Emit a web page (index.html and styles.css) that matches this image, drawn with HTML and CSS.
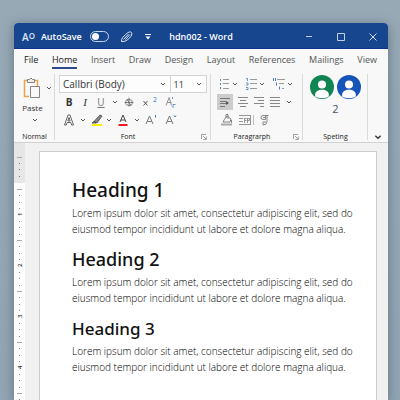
FILE: index.html
```html
<!DOCTYPE html>
<html lang="en">
<head>
<meta charset="utf-8">
<meta name="viewport" content="width=device-width, initial-scale=1">
<title>hdn002 - Word</title>
<link rel="stylesheet" href="styles.css">
</head>
<body>
<svg class="defs" aria-hidden="true">
  <symbol id="chev" viewBox="0 0 6 6"><path d="M1 2l2 2 2-2" fill="none" stroke="currentColor" stroke-width="1"/></symbol>
  <symbol id="launch" viewBox="0 0 6 6"><path d="M.5 5V.5H5M2 2l3 3M5.300 2.500v3h-3" fill="none" stroke="currentColor" stroke-width=".8"/></symbol>
  <symbol id="person" viewBox="0 0 24 24"><circle cx="12" cy="12" r="12"/><circle cx="12" cy="9.500" r="4" fill="#fff"/><path d="M5.200 21.500c-.6-4.500 2-6.700 6.800-6.700s7.400 2.200 6.800 6.700c-3.500 2.300-10 2.300-13.600 0z" fill="#fff"/></symbol>
</svg>
<main class="window">
  <header class="titlebar">
    <div class="quick">
      <span class="logo">A<small>O</small></span>
      <label class="autosave">AutoSave <input type="checkbox" class="toggle"></label>
      <button class="pen" aria-label="Edit"><svg width="13" height="12" viewBox="0 0 13 12"><g fill="none" stroke="#dce5f5"><path d="M1.500 10.500c-.5-3 2-5 4-7s5-3.500 6-2 0 3.500-2 5.500-4.500 4-8 3.500z"/><path d="M3.500 8.500l5-5.500M5.500 8.500l4.500-5"/></g></svg></button>
      <button aria-label="Customize toolbar"><svg width="8" height="8" viewBox="0 0 8 8"><path d="M1 1.500h6" stroke="#fff"/><path d="M1.500 3.500h5l-2.500 3z" fill="#fff"/></svg></button>
    </div>
    <h1>hdn002 - Word</h1>
    <div class="controls">
      <button aria-label="Minimize"><svg width="10" height="10" viewBox="0 0 10 10"><path d="M2 4.500h6" stroke="#c4d0e6"/></svg></button>
      <button aria-label="Maximize"><svg width="10" height="10" viewBox="0 0 10 10"><path d="M1.500 1.500h7v7h-7z" fill="none" stroke="#c4d0e6"/></svg></button>
      <button aria-label="Close"><svg width="10" height="10" viewBox="0 0 10 10"><path d="M1.500 1.500l7 7m0-7l-7 7" stroke="#d4deee"/></svg></button>
    </div>
  </header>
  <nav class="tabs">
    <a href="#" class="dark">File</a><a href="#" class="dark active">Home</a><a href="#">Insert</a><a href="#">Draw</a><a href="#">Design</a><a href="#">Layout</a><a href="#">References</a><a href="#">Mailings</a><a href="#">View</a>
  </nav>
  <section class="ribbon">
    <div class="group clipboard">
      <div class="tools">
        <button class="paste">
          <span class="paste-icon"><svg width="18" height="22" viewBox="0 0 18 22"><path d="M5 3.500H1.500v16H6M11 3.500h3.500V9" fill="none" stroke="#e9a54b" stroke-width="1.500"/><path d="M4.500 5.500v-3h2q1.500-3 3 0h2v3z" fill="#eee" stroke="#777" stroke-width=".9"/><path d="M7.500 9.500h9v11h-9z" fill="#f8f8f8" stroke="#777" stroke-width=".9"/></svg><svg class="chev" width="6" height="6"><use href="#chev"/></svg></span>
          <span class="paste-label">Paste</span>
          <svg class="chev low" width="6" height="6"><use href="#chev"/></svg>
        </button>
      </div>
      <footer><span>Normal</span></footer>
    </div>
    <div class="group font">
      <div class="tools">
        <div class="combos">
          <span class="combo family"><select aria-label="Font"><option>Callbri (Body)</option></select><svg class="chev" width="6" height="6"><use href="#chev"/></svg></span>
          <span class="combo size"><select aria-label="Font size"><option>11</option></select><svg class="chev" width="6" height="6"><use href="#chev"/></svg></span>
        </div>
        <div class="row">
          <button class="w16 bold">B</button>
          <button class="w16 italic">I</button>
          <button class="w16 under">U</button>
          <button class="w12" aria-label="Underline styles"><svg class="chev" width="6" height="6"><use href="#chev"/></svg></button>
          <button class="w16" aria-label="Strikethrough"><svg width="10" height="10" viewBox="0 0 10 10"><g fill="none" stroke="#666" stroke-width=".8"><ellipse cx="5" cy="5.500" rx="3.500" ry="3"/><path d="M.5 5.500h9M5 .5v9M3 2l4 7"/></g></svg></button>
          <button class="w24" aria-label="Superscript"><svg width="18" height="14" viewBox="0 0 18 14"><path d="M3.500 6l4 4.500m0-4.500l-4 4.500" stroke="#555" fill="none"/><text x="13" y="7" font-size="7" fill="#447bc4">2</text></svg></button>
          <button class="w20" aria-label="Clear formatting"><svg width="12" height="14" viewBox="0 0 12 14"><path d="M1 10.500l3.200-8 2.300 8M2 7.500h4.500" stroke="#888" fill="none" stroke-width=".9"/><path d="M7.500 2v2M8 13V9.500h2.500" stroke="#447bc4" fill="none" stroke-width=".8"/></svg></button>
        </div>
        <div class="row">
          <button class="w16" aria-label="Text effects"><svg width="12" height="12" viewBox="0 0 12 12"><path d="M1.500 11L5 1h2l3.500 10H8.700l-.9-2.500H4.200L3.300 11zM4.800 7h2.400L6 3.300z" fill="#fff" stroke="#555" stroke-width=".9"/></svg></button>
          <button class="w12" aria-label="Effects list"><svg class="chev" width="6" height="6"><use href="#chev"/></svg></button>
          <button class="w16" aria-label="Highlight"><svg width="12" height="12" viewBox="0 0 12 12"><path d="M3 7.500l6-6.500 2 1-5 7zM1 9l2-1.500L5 9z" fill="#888" stroke="#444" stroke-width=".8"/><path d="M1 11h10" stroke="#ffee00" stroke-width="2"/></svg></button>
          <button class="w8" aria-label="Highlight colors"><svg class="chev" width="6" height="6"><use href="#chev"/></svg></button>
          <button class="w20" aria-label="Font color"><svg width="10" height="12" viewBox="0 0 10 12"><path d="M2 8l3-7 3 7M3 6h4" stroke="#444" fill="none"/><path d="M.5 11h9" stroke="#f01818" stroke-width="2"/></svg></button>
          <button class="w8" aria-label="Font colors"><svg class="chev" width="6" height="6"><use href="#chev"/></svg></button>
          <button class="w20" aria-label="Grow font"><svg width="12" height="12" viewBox="0 0 12 12"><path d="M1 10l3.500-8L8 10M2.300 7.500h4.400" stroke="#777" fill="none"/><path d="M10.500 1v2.500" stroke="#447bc4" fill="none"/></svg></button>
          <button class="w20" aria-label="Shrink font"><svg width="12" height="12" viewBox="0 0 12 12"><path d="M1 10l3.500-8L8 10M2.300 7.500h4.400" stroke="#777" fill="none"/><path d="M9 1.500l1 1.500 1-1.500" stroke="#447bc4" fill="none"/></svg></button>
        </div>
      </div>
      <footer><span>Font</span><svg class="launch" width="6" height="6"><use href="#launch"/></svg></footer>
    </div>
    <div class="group para">
      <div class="tools">
        <div class="row lists">
          <button aria-label="Bullets"><svg width="11" height="12" viewBox="0 0 11 12"><path d="M1.500 1v2m0 2v2m0 2v2" stroke="#5b86c4"/><path d="M4 1.500h6M4 5.500h6M4 10.500h6" stroke="#999"/></svg><svg class="chev" width="6" height="6"><use href="#chev"/></svg></button>
          <button aria-label="Numbering"><svg width="11" height="12" viewBox="0 0 11 12"><path d="M0 .5h1.500V3M0 5h2v2H0M0 9.500h2v2H0" stroke="#5b86c4" stroke-width=".9" fill="none"/><path d="M4 1.500h7M4 5.500h7M4 10.500h7" stroke="#999"/></svg><svg class="chev" width="6" height="6"><use href="#chev"/></svg></button>
          <button aria-label="Multilevel list"><svg width="12" height="12" viewBox="0 0 12 12"><path d="M.5 0v3m2-3v3M3.500 4.500v3M6.500 8.500v3" stroke="#447bc4"/><path d="M4 1.500h8M6 5.500h5M9 10.500h2" stroke="#999"/></svg><svg class="chev" width="6" height="6"><use href="#chev"/></svg></button>
        </div>
        <div class="row">
          <button class="w16 selected" aria-label="Align left"><svg width="12" height="12" viewBox="0 0 12 12"><path d="M1 2.500h10M1 5.500h6M1 7.500h8M1 10.500h5" stroke="#777"/><path d="M7 5l3 2-3 2z" fill="#555"/></svg></button>
          <button class="w20" aria-label="Center"><svg width="12" height="12" viewBox="0 0 12 12"><path d="M1 1.500h10M3 4.500h6M1 7.500h10M3 10.500h6" stroke="#888"/></svg></button>
          <button class="w12" aria-label="Align right"><svg width="12" height="12" viewBox="0 0 12 12"><path d="M1 1.500h10M5 4.500h6M1 7.500h10M7 10.500h4" stroke="#888"/></svg></button>
          <button class="w20" aria-label="Justify"><svg width="12" height="12" viewBox="0 0 12 12"><path d="M1 1.500h10M1 4.500h10M1 7.500h10M1 10.500h10" stroke="#888"/></svg></button>
          <button class="w8" aria-label="Spacing"><svg class="chev" width="6" height="6"><use href="#chev"/></svg></button>
        </div>
        <div class="row">
          <button class="w20" aria-label="Shading"><svg width="12" height="12" viewBox="0 0 12 12"><path d="M2 8h7l1-3-4-3-3 4zM5 4V.5h2V5M10.500 6v3" fill="none" stroke="#777" stroke-width=".9"/><path d="M0 10.500h11" stroke="#aaa" stroke-width="2"/></svg></button>
          <button class="w16" aria-label="Borders"><svg width="12" height="12" viewBox="0 0 12 12"><path d="M0 1.500h12M0 10.500h12M0 4.500h4M0 7.500h4M11.500 2v8M5.500 4v5M5.500 4.500h2M5.500 6.500h2M8.500 4v5M8.500 4.500h2v2h-2" stroke="#888" stroke-width=".9" fill="none"/></svg></button>
          <span class="divider"></span>
          <button class="w20" aria-label="Show paragraph marks"><svg width="10" height="12" viewBox="0 0 10 12"><path d="M9.500 1.500H4a2 2 0 0 0 0 4h2.500V1.500M8 2v5.500Q8 11 4 11V8h3M4 3.500h3" stroke="#888" fill="none"/></svg></button>
        </div>
      </div>
      <footer><span>Paragrarph</span><svg class="launch" width="6" height="6"><use href="#launch"/></svg></footer>
    </div>
    <div class="group spell">
      <div class="tools">
        <div class="people"><svg class="green" width="24" height="24"><use href="#person"/></svg><svg class="blue" width="24" height="24"><use href="#person"/></svg></div>
        <span class="count">2</span>
      </div>
      <footer><span>Speting</span></footer>
    </div>
    <button class="collapse" aria-label="Collapse ribbon"><svg width="8" height="8"><use href="#chev"/></svg></button>
  </section>
  <section class="workspace">
    <svg class="ruler" width="11" height="257" viewBox="0 0 11 257" aria-hidden="true">
      <defs>
        <pattern id="marks" y="46" width="11" height="51" patternUnits="userSpaceOnUse">
          <path d="M3 0.500h5" stroke="#aaa"/><path d="M5 6.500h1M5 13.500h1M5 19.500h1M5 32.500h1M5 38.500h1M5 45.500h1" stroke="#888"/>
        </pattern>
      </defs>
      <path d="M0 0h11v257H0z" fill="#fdfdfd"/><path d="M0 0h11v40H0z" fill="#e6e6e6"/>
      <path d="M3 14.500h5" stroke="#aaa"/><path d="M5 20.500h1M5 26.500h1M5 33.500h1" stroke="#777"/>
      <path d="M0 46h11v211H0z" fill="url(#marks)"/>
      <g class="digits"><text transform="translate(8 73) rotate(-90)">1</text><text transform="translate(8 124) rotate(-90)">2</text><text transform="translate(8 175) rotate(-90)">3</text><text transform="translate(8 226) rotate(-90)">4</text></g>
    </svg>
    <article class="page">
      <h2>Heading 1</h2>
      <p>Lorem ipsum dolor sit amet, consectetur adipiscing elit, sed do eiusmod tempor incididunt ut labore et dolore magna aliqua.</p>
      <h3>Heading 2</h3>
      <p>Lorem ipsum dolor sit amet, consectetur adipiscing elit, sed do eiusmod tempor incididunt ut labore et dolore magna aliqua.</p>
      <h4>Heading 3</h4>
      <p>Lorem ipsum dolor sit amet, consectetur adipiscing elit, sed do eiusmod tempor incididunt ut labore et dolore magna aliqua.</p>
    </article>
  </section>
</main>
</body>
</html>
```
FILE: styles.css
```css
* { box-sizing: border-box; }
body {
  margin: 0;
  min-height: 100vh;
  display: flex;
  padding: 23px 12px 0 14px;
  background: linear-gradient(#98a9b6, #92a5b4);
  font-family: "Open Sans", "Noto Sans", sans-serif;
  font-size: 9px;
  color: #333;
}
.defs { display: none; }
button {
  display: flex;
  align-items: center;
  justify-content: center;
  padding: 0;
  border: 0;
  background: none;
  font: inherit;
  color: inherit;
}
svg { display: block; flex: none; }
.window {
  flex: 1;
  min-width: 0;
  display: flex;
  flex-direction: column;
  border-radius: 4px 4px 0 0;
  background: #f7f8f7;
  box-shadow: 0 2px 12px rgba(40, 55, 70, .45);
}
.titlebar {
  display: grid;
  grid-template-columns: 1fr auto 1fr;
  align-items: center;
  height: 26px;
  padding: 2px 8px 0 8px;
  border-bottom: 1px solid #10308a;
  border-radius: 4px 4px 0 0;
  background: #17468f;
  color: #fff;
}
.titlebar h1 { margin: 0; font-size: 9px; font-weight: 600; }
.quick, .controls, .autosave { display: flex; align-items: center; }
.quick { gap: 6px; }
.quick button { margin-left: 5px; }
.logo { display: flex; font-size: 10px; font-weight: 600; color: #dce5f5; }
.logo small { font-size: 8px; }
.autosave { gap: 8px; font-weight: 600; }
.toggle {
  appearance: none;
  display: flex;
  align-items: center;
  width: 19px;
  height: 11px;
  margin: 0;
  padding: 0 1px;
  border: 1px solid #c9d6ee;
  border-radius: 6px;
}
.toggle::before { content: ""; width: 7px; height: 7px; border-radius: 50%; background: #fff; }
.controls { justify-content: flex-end; gap: 22px; padding-right: 2px; }
.tabs {
  display: flex;
  justify-content: space-between;
  height: 24px;
  padding: 3px 11px 0 10px;
}
.tabs a {
  height: 17px;
  line-height: 16px;
  color: #555;
  text-decoration: none;
}
.tabs .dark { color: #222; }
.tabs .active { border-bottom: 2px solid #2e4a8a; }
.ribbon {
  display: grid;
  grid-template-columns: 41fr 156fr 92fr 65fr 20fr;
  height: 70px;
  border-bottom: 1px solid #d2d2d2;
}
.group {
  position: relative;
  display: flex;
  flex-direction: column;
  justify-content: space-between;
  min-width: 0;
  padding-top: 2px;
}
.group::after {
  content: "";
  position: absolute;
  top: 1px;
  right: 0;
  bottom: 2px;
  border-right: 1px solid #d9dad9;
}
.group footer {
  display: flex;
  align-items: center;
  height: 11px;
  font-size: 7px;
  line-height: 11px;
  color: #222;
}
.group footer span { flex: 1; text-align: center; }
.launch { margin-right: 4px; color: #888; }
.chev { color: #555; }
.paste {
  flex-direction: column;
  width: 100%;
  font-size: 8px;
  line-height: 12px;
}
.paste-label { margin-right: 4px; }
.paste-icon { display: flex; align-items: center; gap: 5px; padding: 2px 0 3px 6px; }
.low { margin-top: 3px; }
.font .tools { padding-left: 4px; }
.combos { display: flex; margin-right: 4px; }
.combo {
  display: flex;
  align-items: center;
  height: 18px;
  padding-right: 4px;
  border: 1px solid #d2d3d2;
  background: #fdfdfd;
}
.family { flex: 114; }
.size { flex: 34; margin-left: -1px; }
.combo select {
  appearance: none;
  flex: 1;
  min-width: 0;
  padding: 0 0 0 3px;
  border: 0;
  background: none;
  font: inherit;
  font-size: 10px;
  color: #333;
}
.size select { font-size: 9px; }
.row { display: flex; align-items: center; height: 18px; padding-left: 2px; }
.w8 { width: 8px; }
.w12 { width: 12px; }
.w16 { width: 16px; }
.w20 { width: 20px; }
.w24 { width: 24px; }
.bold { font-size: 10px; font-weight: 700; }
.italic { font-family: "Liberation Serif", serif; font-style: italic; font-size: 11px; }
.under { font-size: 10px; text-decoration: underline; color: #777; }
.para .tools { padding-left: 6px; }
.para .row { padding: 0; }
.para .lists { gap: 8px; padding-left: 2px; }
.lists button { gap: 2px; }
.selected { height: 16px; background: #cbcccb; }
.divider { height: 10px; border-left: 1px solid #bbb; }
.spell .tools { display: flex; flex-direction: column; align-items: center; }
.people { display: flex; gap: 3px; }
.green { fill: #108452; }
.blue { fill: #1555b9; }
.count { font-size: 11px; line-height: 19px; color: #44556b; }
.collapse { align-items: flex-end; padding-bottom: 1px; }
.workspace {
  flex: 1;
  display: flex;
  align-items: stretch;
  gap: 14px;
  padding-right: 11px;
  background: #f0f1f0;
}
.digits { font-size: 6px; font-weight: 600; fill: #333; }
.page {
  flex: 1;
  margin-top: 8px;
  padding: 25px 18px 0 32px;
  border: 1px solid #ccc;
  border-bottom: 0;
  background: #fff;
}
.page h2, .page h3, .page h4 {
  margin: 0;
  font-family: "Noto Sans", "Open Sans", sans-serif;
  font-weight: 500;
  line-height: 27px;
  color: #111;
}
.page h2 { font-size: 19px; }
.page h3 { font-size: 18px; }
.page h4 { font-size: 17px; }
.page p { margin: 1px 0 9px; font-size: 10px; font-weight: 300; line-height: 16px; color: #000; }
```
